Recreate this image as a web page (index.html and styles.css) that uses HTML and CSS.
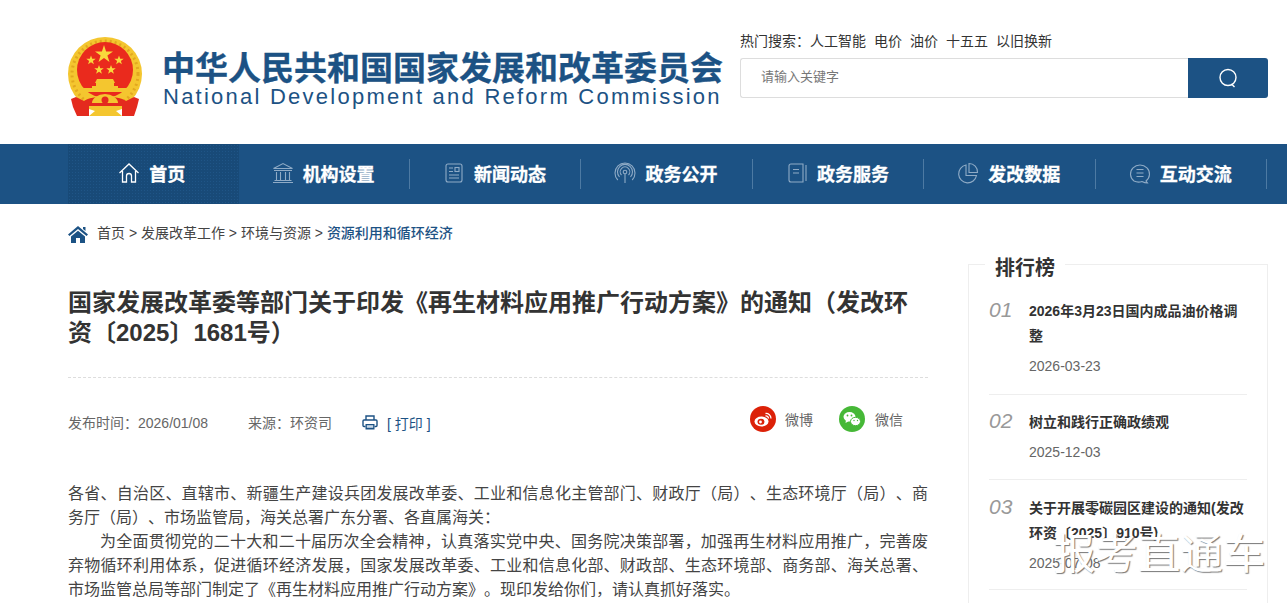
FILE: index.html
```html
<!DOCTYPE html>
<html lang="zh-CN">
<head>
<meta charset="utf-8">
<title>国家发展改革委</title>
<link rel="stylesheet" href="styles.css">
</head>
<body>
<header class="header">
  <div class="wrap header-in">
    <div class="brand">
      <svg class="emblem" viewBox="0 0 74 80" aria-hidden="true">
        <circle cx="37" cy="37" r="37" fill="#f4c62f"/>
        <circle cx="37" cy="37" r="33" fill="none" stroke="#e2a81f" stroke-width="3" stroke-dasharray="2 3"/>
        <circle cx="37" cy="33" r="28" fill="#ea2a1d"/>
        <polygon points="36,8 38.100,14.500 45,14.500 39.400,18.600 41.500,25 36,21 30.500,25 32.600,18.600 27,14.500 33.900,14.500" fill="#f8d83c"/>
        <polygon points="23,18.500 24.200,21.800 27.700,21.800 24.900,23.900 25.900,27.300 23,25.300 20.100,27.300 21.100,23.900 18.300,21.800 21.800,21.800" fill="#f8d83c"/>
        <polygon points="51,18.500 52.200,21.800 55.700,21.800 52.900,23.900 53.900,27.300 51,25.300 48.100,27.300 49.100,23.900 46.300,21.800 49.800,21.800" fill="#f8d83c"/>
        <polygon points="31,28 32.200,31.300 35.700,31.300 32.900,33.400 33.900,36.800 31,34.800 28.100,36.800 29.100,33.400 26.300,31.300 29.800,31.300" fill="#f8d83c"/>
        <polygon points="43,28 44.200,31.300 47.700,31.300 44.900,33.400 45.900,36.800 43,34.800 40.100,36.800 41.100,33.400 38.300,31.300 41.800,31.300" fill="#f8d83c"/>
        <path d="M29 42 H45 L47 46 H46 V49 H50 V51 H24 V49 H28 V46 H27 Z" fill="#f4c62f"/>
        <path d="M14 51 H60 L62 55 H12 Z" fill="#f4c62f"/>
        <path d="M8 60 L3 62 L5 70 L9 79 L21 79 L21 69 L54 69 L54 79 L66 79 L69 70 L71 62 L66 60 L58 64 C50 58 24 58 16 64 Z" fill="#e42a1e"/>
        <path d="M24 66 A13 9 0 0 1 50 66 Z" fill="#f4c62f"/>
        <circle cx="37" cy="63" r="3.500" fill="#e42a1e"/>
        <path d="M21 69 H54 V72 L48 74 L54 79 H21 L27 74 L21 72 Z" fill="#f4c62f"/>
      </svg>
      <div class="brand-text">
        <div class="brand-cn">中华人民共和国国家发展和改革委员会</div>
        <div class="brand-en">National Development and Reform Commission</div>
      </div>
    </div>
    <div class="search-area">
      <div class="hot"><span>热门搜索：</span><a>人工智能</a><a>电价</a><a>油价</a><a>十五五</a><a>以旧换新</a></div>
      <div class="search">
        <div class="search-input">请输入关键字</div>
        <div class="search-btn">
          <svg width="20" height="20" viewBox="0 0 20 20" fill="none" stroke="#fff" stroke-width="1.4"><circle cx="10" cy="9.5" r="8"/><path d="M13.5 16 L16.5 19"/></svg>
        </div>
      </div>
    </div>
  </div>
</header>

<nav class="nav">
  <div class="wrap nav-in">
    <a class="nav-item active">
      <svg class="nav-ico bright" viewBox="0 0 22 22"><path d="M1.5 11 L11 2 L20.5 11 M4.5 9 V20 H8.5 V14 A2.5 2.5 0 0 1 13.5 14 V20 H17.5 V9"/></svg>
      <span>首页</span>
    </a>
    <a class="nav-item">
      <svg class="nav-ico" viewBox="0 0 22 22"><path d="M1.5 6.5 L11 1.5 L20.5 6.5 Z M2 8.5 H20 M4.5 10 V18 M8.5 10 V18 M13.5 10 V18 M17.5 10 V18 M2.5 18.5 H19.5 M1 20.5 H21"/></svg>
      <span>机构设置</span>
    </a>
    <a class="nav-item">
      <svg class="nav-ico" viewBox="0 0 22 22"><rect x="3" y="2" width="16" height="18" rx="2"/><path d="M6 6 H10 M6 9.5 H10 M6 13 H16 M6 16 H16"/><rect x="12" y="5.5" width="4" height="4"/></svg>
      <span>新闻动态</span>
    </a>
    <a class="nav-item">
      <svg class="nav-ico" viewBox="0 0 22 22"><path d="M11 12 V21 M5.5 15 A7.5 7.5 0 1 1 16.500 15 M7.500 13 A4.800 4.800 0 1 1 14.500 13 M3.800 18 A10 10 0 1 1 18.200 18"/><circle cx="11" cy="10" r="1.800"/></svg>
      <span>政务公开</span>
    </a>
    <a class="nav-item">
      <svg class="nav-ico" viewBox="0 0 22 22"><path d="M17 2 H5 A2 2 0 0 0 3 4 V18 A2 2 0 0 0 5 20 H17 Z M20 3 V19 M7 7.500 H13 M7 11 H13"/></svg>
      <span>政务服务</span>
    </a>
    <a class="nav-item">
      <svg class="nav-ico" viewBox="0 0 22 22"><path d="M9 3 A9 9 0 1 0 19.500 13.500 H9 Z M12 1.500 A8.500 8.500 0 0 1 20.500 10.500 H12 Z"/></svg>
      <span>发改数据</span>
    </a>
    <a class="nav-item last">
      <svg class="nav-ico" viewBox="0 0 22 22"><path d="M5 19 A9.500 9 0 1 1 17 19 L18.500 21 C15 21 14 20 13 19.500 C10 20.500 7 20 5 19 Z M7.500 7.500 H14.500 M7.500 11 H14.500 M7.500 14.500 H14.500"/></svg>
      <span>互动交流</span>
    </a>
  </div>
</nav>

<div class="wrap crumbs">
  <svg class="crumb-home" width="20" height="17" viewBox="0 0 20 17"><path d="M10 0 L20 8.500 L18.500 10 L10 3 L1.500 10 L0 8.500 Z M3 10.500 L10 4.800 L17 10.500 V17 H12 V12 H8 V17 H3 Z M15 1 H17.500 V5 L15 3 Z" fill="#1c5284"/></svg>
  <span>首页 &gt; 发展改革工作 &gt; 环境与资源 &gt; <b>资源利用和循环经济</b></span>
</div>

<main class="wrap main">
  <article class="article">
    <h1>国家发展改革委等部门关于印发《再生材料应用推广行动方案》的通知（发改环资〔2025〕1681号）</h1>
    <div class="meta">
      <div class="meta-left">
        <span class="meta-time">发布时间：2026/01/08</span>
        <span class="meta-src">来源：环资司</span>
        <a class="print">
          <svg width="16" height="15" viewBox="0 0 16 15" fill="none" stroke="#1c5284" stroke-width="1.400"><path d="M4 5 V1 H12 V5"/><path d="M3.500 11.500 H2 A1 1 0 0 1 1 10.500 V6 A1 1 0 0 1 2 5 H14 A1 1 0 0 1 15 6 V10.500 A1 1 0 0 1 14 11.500 H12.500"/><rect x="3.500" y="9" width="9" height="5.500" fill="#1c5284" stroke="none"/><rect x="4.800" y="10.200" width="6.400" height="2.600" fill="#c9d8e6" stroke="none"/></svg>
          <span>[ 打印 ]</span>
        </a>
      </div>
      <div class="share">
        <span class="share-item">
          <svg width="26" height="26" viewBox="0 0 26 26"><circle cx="13" cy="13" r="13" fill="#dc2108"/><ellipse cx="11.500" cy="15.500" rx="7" ry="5" fill="#fff"/><ellipse cx="11" cy="15.800" rx="3.500" ry="3" fill="#dc2108"/><circle cx="10.500" cy="16" r="1.400" fill="#fff"/><path d="M15.500 7.500 A5 5 0 0 1 21 12.500 M15.500 10 A2.600 2.600 0 0 1 18.500 12.500" stroke="#fff" stroke-width="1.300" fill="none"/></svg>
          <span>微博</span>
        </span>
        <span class="share-item">
          <svg width="26" height="26" viewBox="0 0 26 26"><circle cx="13" cy="13" r="13" fill="#46b837"/><ellipse cx="10.500" cy="10.800" rx="6" ry="4.800" fill="#fff"/><path d="M7 14 L6.500 17 L10 15 Z" fill="#fff"/><ellipse cx="16.500" cy="15.500" rx="5" ry="4.200" fill="#fff" stroke="#46b837" stroke-width="1"/><circle cx="8.500" cy="9.500" r=".9" fill="#46b837"/><circle cx="12.500" cy="9.500" r=".9" fill="#46b837"/><circle cx="15" cy="14.500" r=".7" fill="#46b837"/><circle cx="18.500" cy="14.500" r=".7" fill="#46b837"/></svg>
          <span>微信</span>
        </span>
      </div>
    </div>
    <div class="body-text">
      <p>各省、自治区、直辖市、新疆生产建设兵团发展改革委、工业和信息化主管部门、财政厅（局）、生态环境厅（局）、商务厅（局）、市场监管局，海关总署广东分署、各直属海关：</p>
      <p class="indent">为全面贯彻党的二十大和二十届历次全会精神，认真落实党中央、国务院决策部署，加强再生材料应用推广，完善废弃物循环利用体系，促进循环经济发展，国家发展改革委、工业和信息化部、财政部、生态环境部、商务部、海关总署、市场监管总局等部门制定了《再生材料应用推广行动方案》。现印发给你们，请认真抓好落实。</p>
    </div>
  </article>

  <aside class="rank">
    <h2 class="rank-title">排行榜</h2>
    <ul class="rank-list">
      <li class="rank-item">
        <i class="rank-no">01</i>
        <div class="rank-body">
          <a class="rank-link">2026年3月23日国内成品油价格调整</a>
          <div class="rank-date">2026-03-23</div>
        </div>
      </li>
      <li class="rank-item">
        <i class="rank-no">02</i>
        <div class="rank-body">
          <a class="rank-link">树立和践行正确政绩观</a>
          <div class="rank-date">2025-12-03</div>
        </div>
      </li>
      <li class="rank-item">
        <i class="rank-no">03</i>
        <div class="rank-body">
          <a class="rank-link">关于开展零碳园区建设的通知(发改环资〔2025〕910号)</a>
          <div class="rank-date">2025-07-08</div>
        </div>
      </li>
    </ul>
  </aside>
</main>

<div class="watermark">报考直通车</div>
</body>
</html>
```

FILE: styles.css
```css
* { box-sizing: border-box; }
html, body { margin: 0; padding: 0; height: 603px; overflow: hidden; background: #fff; }
body { font-family: "Liberation Sans", "Noto Sans CJK SC", sans-serif; color: #333; position: relative; }
ul { list-style: none; margin: 0; padding: 0; }
.wrap { width: 1200px; margin-left: 68px; }

.header { height: 144px; }
.header-in { display: flex; justify-content: space-between; height: 144px; }
.brand { display: flex; align-items: flex-start; padding-top: 37px; }
.emblem { width: 74px; height: 80px; display: block; }
.brand-text { margin-left: 21px; width: 560px; }
.brand-cn { font-size: 33px; line-height: 34px; margin-top: 15px; margin-left: -1px; font-weight: 700; color: #1c5284; white-space: nowrap; -webkit-text-stroke: .3px #1c5284; }
.brand-en { font-size: 22px; line-height: 22px; color: #1c5284; letter-spacing: 2.24px; white-space: nowrap; }

.search-area { width: 528px; padding-top: 31px; }
.hot { font-size: 14px; line-height: 20px; color: #333; white-space: nowrap; }
.hot a { margin-right: 8px; }
.search { display: flex; height: 40px; margin-top: 7px; }
.search-input { flex: 1; border: 1px solid #ddd; border-right: 0; border-radius: 3px 0 0 3px; padding-left: 20px; font-size: 13px; line-height: 36px; color: #777; }
.search-btn { width: 80px; background: #1c5284; border-radius: 0 3px 3px 0; display: flex; align-items: center; justify-content: center; }

.nav { height: 60px; background: #1c5284; }
.nav-in { display: grid; grid-template-columns: repeat(7, 1fr); height: 60px; align-items: stretch; }
.nav-item { position: relative; display: flex; align-items: center; justify-content: center; gap: 9px; padding: 0 4px 2px 0; color: #fff; font-size: 18px; font-weight: 700; -webkit-text-stroke: .3px #fff; }
.nav-item:not(.active)::after { content: ""; position: absolute; right: 1px; top: 15px; height: 30px; width: 1px; background: #4d7aa3; }
.nav-item:nth-child(1)::after { display: none; }
.nav-item.active { background-color: #184a78; background-image: radial-gradient(#1f5587 .6px, transparent .7px); background-size: 3px 3px; }
.nav-ico { width: 22px; height: 22px; fill: none; stroke: #8fabc6; stroke-width: 1.1; flex: none; }
.nav-ico.bright { stroke: #fff; stroke-width: 1.300; }

.crumbs { display: flex; align-items: center; gap: 9px; height: 20px; margin-top: 20px; margin-bottom: -1px; font-size: 14px; line-height: 18px; color: #444; white-space: nowrap; }
.crumbs span { position: relative; top: -1px; }
.crumbs b { font-weight: 500; color: #1c5284; }

.main { display: flex; justify-content: space-between; align-items: flex-start; margin-top: 32px; }
.article { width: 860px; padding-top: 13px; }
h1 { margin: 0; font-size: 24px; line-height: 30px; font-weight: 700; color: #333; padding-bottom: 29px; border-bottom: 1px dashed #ddd; }
.meta { display: flex; justify-content: space-between; margin-top: 27px; height: 36px; font-size: 14px; color: #666; }
.meta-left { display: flex; align-items: center; height: 33px; }
.meta-time { width: 180px; }
.meta-src { width: 114px; }
.print { display: flex; align-items: center; gap: 9px; color: #1c5284; margin-top: 2px; }
.share { display: flex; gap: 26px; padding-right: 25px; }
.share-item { display: flex; align-items: center; gap: 10px; height: 28px; font-size: 14px; color: #666; }
.share-item:first-child { gap: 9px; }
.body-text { margin-top: 41px; font-size: 16px; line-height: 24px; color: #444; text-spacing-trim: space-all; }
.body-text p { margin: 0; text-align: justify; }
.indent { text-indent: 2em; }

.rank { position: relative; width: 300px; height: 400px; margin-top: -11px; border: 1px solid #eee; padding: 0 20px; }
.rank-title { position: absolute; left: 16px; top: -12px; margin: 0; padding: 0 10px; background: #fff; font-size: 20px; line-height: 30px; font-weight: 700; color: #333; }
.rank-list { padding-top: 22px; }
.rank-item { display: flex; padding: 12px 0 15px; border-bottom: 1px solid #eee; }
.rank-item:first-child { padding-bottom: 16px; }
.rank-item:nth-child(2) { padding-top: 15px; }
.rank-item:last-child { padding-top: 16px; padding-bottom: 14px; }
.rank-no { width: 40px; flex: none; margin-top: -1px; font-size: 21px; line-height: 24px; color: #999; font-family: "Liberation Sans", sans-serif; }
.rank-link { display: block; font-size: 14px; line-height: 25px; font-weight: 700; color: #333; }
.rank-date { margin-top: 5px; font-size: 14px; line-height: 24px; color: #666; }

.watermark { position: absolute; left: 1053px; top: 530px; font-size: 42.500px; line-height: 50px; color: #fff; white-space: nowrap; text-shadow: 1px 1px 1px #777; }
```
